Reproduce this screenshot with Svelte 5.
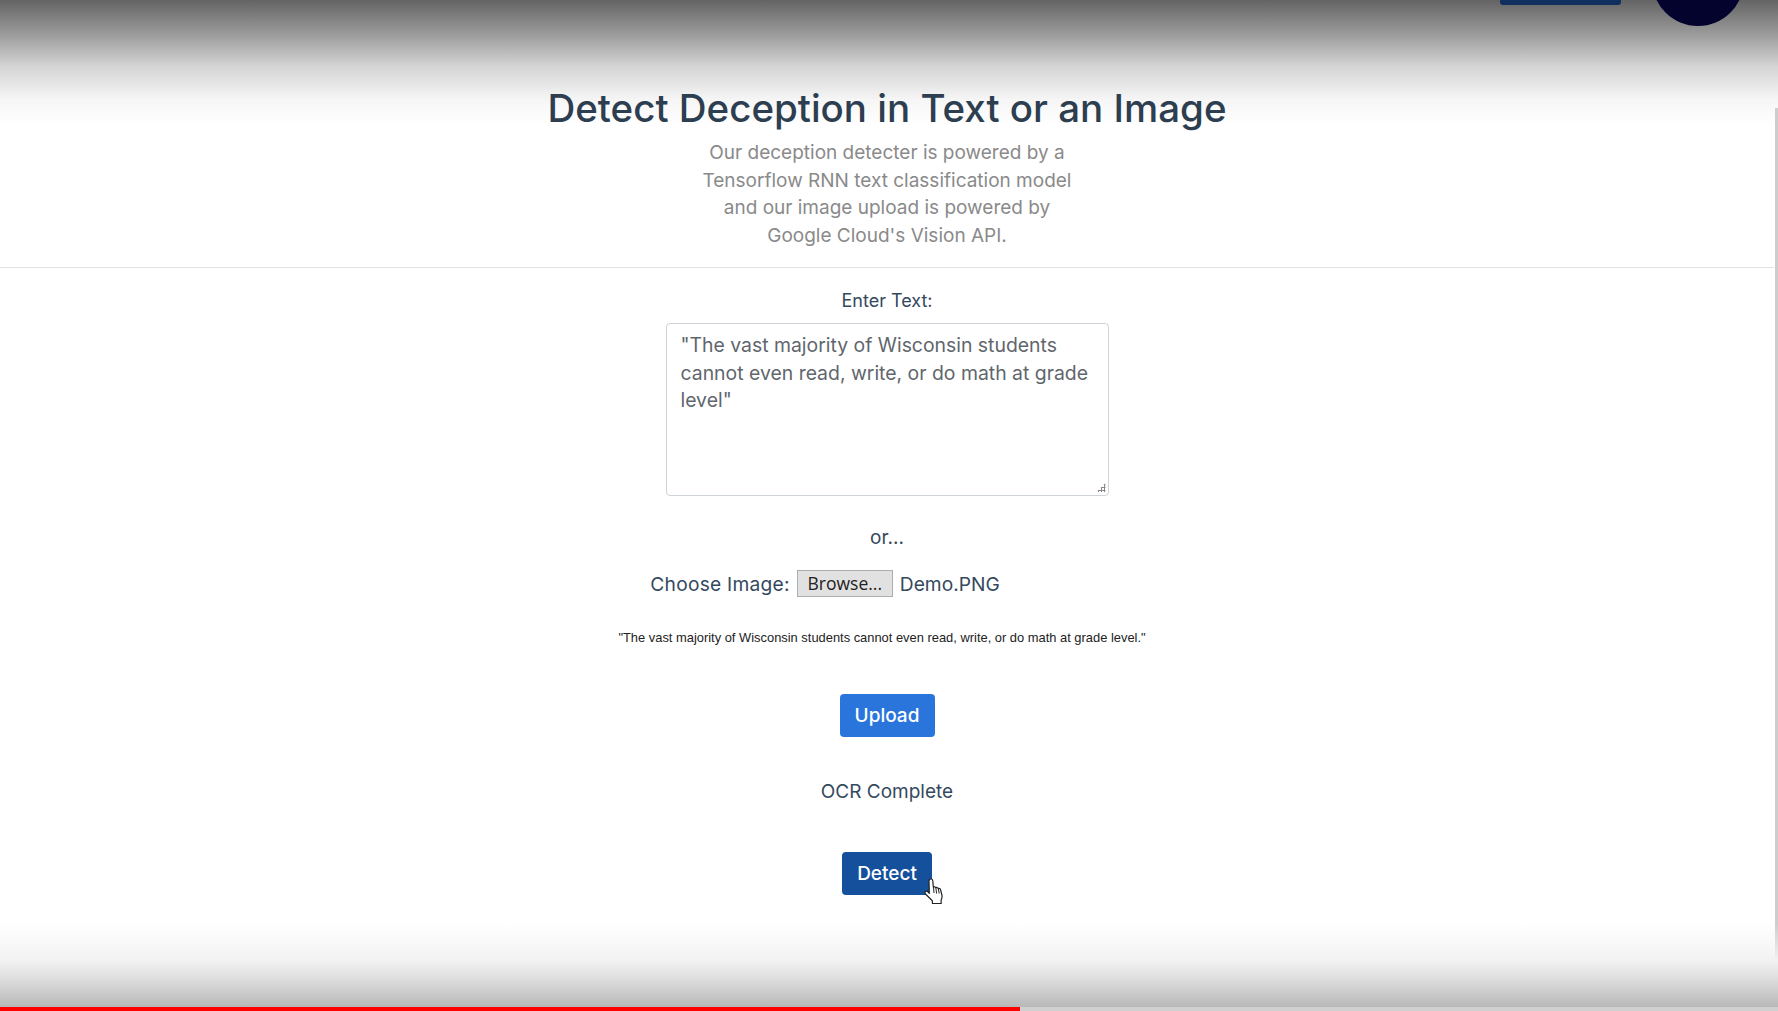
<script>
  let text = `"The vast majority of Wisconsin students cannot even read, write, or do math at grade level"`;
</script>

<div class="page">
  <div class="top-shade"></div>
  <span class="nav-btn"></span>
  <span class="nav-circle"></span>
  <div class="scroll-track"></div>

  <div class="content">
    <header class="intro">
      <h1>Detect Deception in Text or an Image</h1>
      <p>Our deception detecter is powered by a<br />Tensorflow RNN text classification model<br />and our image upload is powered by<br />Google Cloud's Vision API.</p>
    </header>

    <main class="form">
      <label for="txt">Enter Text:</label>
      <div class="text-wrap">
        <textarea id="txt" bind:value={text}></textarea>
        <span class="grip"></span>
      </div>
      <div class="or">or...</div>
      <div class="file-row">
        <span class="choose">Choose Image:</span>
        <button class="browse">Browse...</button>
        <span>Demo.PNG</span>
      </div>
      <div class="preview">"The vast majority of Wisconsin students cannot even read, write, or do math at grade level."</div>
      <button class="btn upload">Upload</button>
      <div class="status">OCR Complete</div>
      <div class="detect-wrap">
        <button class="btn detect">Detect</button>
        <svg class="cursor" width="21" height="26" viewBox="0 0 21 26">
          <path d="M7 1c1 0 1.700.7 1.800 1.700l.5 6.300c1-.5 2-.2 2.400.7.900-.5 2-.2 2.400.8 1-.4 2.100.1 2.400 1.200l1.400 5.300c.4 2 .1 3.500-.8 5l.1 3.500H8.500l-.2-2.800L1.500 16c-.8-1-.6-2.100.2-2.600.8-.5 1.700-.2 2.400.6l1.200 1.300L5 3C5 1.800 5.900 1 7 1z" fill="#fff" stroke="#222" stroke-width="1.200" stroke-linejoin="round"/>
          <path d="M9.500 9l.5 6M11.900 10l.7 5.500M14.400 11l.8 4.500" fill="none" stroke="#222" stroke-width="1"/>
        </svg>
      </div>
    </main>
  </div>

  <div class="bottom-shade"></div>
  <div class="progress"><div class="played"></div></div>
</div>

<style>
  :global(body) {
    margin: 0;
    background: #fff;
  }

  .page {
    position: relative;
    width: 1778px;
    height: 1011px;
    overflow: hidden;
    background: #fff;
    color: #34495e;
    font-family: Inter, "Open Sans", sans-serif;
  }

  .top-shade {
    position: absolute;
    inset: 0 0 auto 0;
    height: 125px;
    background: linear-gradient(to bottom, #646464, #9a9a9a 27%, #d4d4d4 53%, #f6f6f6 80%, #fff);
  }

  .bottom-shade {
    position: absolute;
    inset: auto 0 4px 0;
    height: 84px;
    background: linear-gradient(to bottom, #fff0, #f2f2f2 45%, #dcdcdc 68%, #b8b8b8);
    pointer-events: none;
  }

  .nav-btn {
    position: absolute;
    left: 1500px;
    top: -20px;
    width: 121px;
    height: 25px;
    background: #0f2f5f;
    border-radius: 3px;
  }

  .nav-circle {
    position: absolute;
    left: 1652px;
    top: -66px;
    width: 92px;
    height: 92px;
    border-radius: 50%;
    background: #03032e;
  }

  .scroll-track {
    position: absolute;
    right: 0;
    top: 108px;
    bottom: 4px;
    width: 3px;
    background: #cdcdcd;
  }

  .content {
    position: relative;
    width: 1774px;
  }

  .intro {
    box-sizing: border-box;
    height: 268px;
    padding-top: 83px;
    border-bottom: 1px solid #e2e2e2;
    text-align: center;
  }

  h1 {
    margin: 0;
    font-size: 38.500px;
    line-height: 50px;
    font-weight: 500;
    color: #2c3e50;
  }

  .intro p {
    margin: 6px 0 0;
    font-size: 19px;
    line-height: 27.500px;
    color: #8a8a8a;
  }

  .form {
    display: flex;
    flex-direction: column;
    align-items: center;
  }

  label {
    margin-top: 20px;
    font-size: 18px;
    line-height: 26px;
  }

  .text-wrap {
    position: relative;
    margin-top: 9px;
    height: 173px;
  }

  textarea {
    display: block;
    box-sizing: border-box;
    width: 443px;
    height: 173px;
    padding: 8px 14px;
    border: 1px solid #ced4da;
    border-radius: 4px;
    font: 19.400px/27.500px Inter, "Open Sans", sans-serif;
    color: #5f666d;
    outline: none;
    resize: none;
  }

  .grip {
    position: absolute;
    right: 3px;
    bottom: 4px;
    width: 9px;
    height: 9px;
    background: radial-gradient(circle, #888 1px, transparent 1.200px) 0 0 / 3px 3px;
    clip-path: polygon(100% 0, 100% 100%, 0 100%);
  }

  .or {
    margin-top: 28px;
    font-size: 19px;
    line-height: 28px;
  }

  .file-row {
    display: flex;
    align-items: center;
    gap: 7px;
    margin-top: 18px;
    margin-right: 124px;
    font-size: 19.200px;
  }

  .choose {
    letter-spacing: 0.25px;
  }

  .browse {
    width: 96px;
    height: 27px;
    padding: 0;
    background: #e1e1e1;
    border: 1px solid #adadad;
    border-radius: 0;
    font: 17.500px/25px "Open Sans", sans-serif;
    color: #222;
  }

  .preview {
    margin-top: 33px;
    margin-right: 10px;
    font: 12.900px "Liberation Sans", Arial, sans-serif;
    color: #222;
  }

  .btn {
    border: none;
    border-radius: 4px;
    color: #fff;
    font: 500 19px Inter, "Open Sans", sans-serif;
    height: 43px;
    padding: 0;
  }

  .upload {
    width: 95px;
    margin-top: 49px;
    background: #2a75dc;
  }

  .status {
    margin-top: 40px;
    font-size: 19px;
    line-height: 30px;
  }

  .detect-wrap {
    position: relative;
    margin-top: 45px;
    height: 43px;
  }

  .detect {
    width: 90px;
    background: #14509b;
  }

  .cursor {
    position: absolute;
    left: 82px;
    top: 26px;
  }

  .progress {
    position: absolute;
    left: 0;
    right: 0;
    bottom: 0;
    height: 4px;
    background: #d0d0d0;
  }

  .played {
    width: 1020px;
    height: 100%;
    background: #f00;
  }
</style>
